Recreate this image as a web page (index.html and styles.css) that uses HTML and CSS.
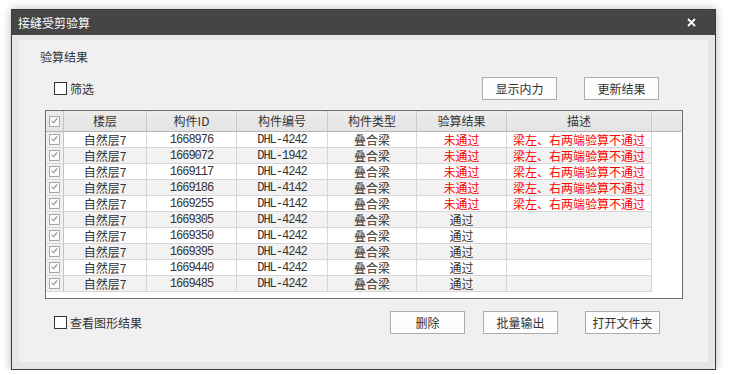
FILE: index.html
```html
<!DOCTYPE html>
<html lang="zh-CN">
<head>
  <meta charset="UTF-8">
  <title>接缝受剪验算</title>
  <link rel="stylesheet" href="styles.css">
</head>
<body>
  <div class="window">
    <div class="titlebar">
      <span class="title">接缝受剪验算</span>
      <svg class="close" width="9" height="9" viewBox="0 0 9 9">
        <path d="M1 1 L8 8 M8 1 L1 8" stroke="#fff" stroke-width="1.8"/>
      </svg>
    </div>
    <div class="frame">
      <div class="panel">
        <div class="caption">验算结果</div>
        <div class="toolbar">
          <label class="check"><span class="box"></span>筛选</label>
          <button class="btn">显示内力</button>
          <button class="btn gap">更新结果</button>
        </div>

        <div class="grid">
          <div class="row head">
            <div class="cell cb"><span class="tick"></span></div>
            <div class="cell">楼层</div>
            <div class="cell">构件ID</div>
            <div class="cell">构件编号</div>
            <div class="cell">构件类型</div>
            <div class="cell">验算结果</div>
            <div class="cell">描述</div>
            <div class="cell"></div>
          </div>
        </div>

        <div class="footer">
          <label class="check"><span class="box"></span>查看图形结果</label>
          <button class="btn">删除</button>
          <button class="btn small-gap">批量输出</button>
          <button class="btn gap">打开文件夹</button>
        </div>
      </div>
    </div>
  </div>
  <script>
    // rows of the check result
    const rows = [
      ['1668976', 'DHL-4242', false],
      ['1669072', 'DHL-1942', false],
      ['1669117', 'DHL-4242', false],
      ['1669186', 'DHL-4142', false],
      ['1669255', 'DHL-4142', false],
      ['1669305', 'DHL-4242', true],
      ['1669350', 'DHL-4242', true],
      ['1669395', 'DHL-4242', true],
      ['1669440', 'DHL-4242', true],
      ['1669485', 'DHL-4242', true],
    ];
    const grid = document.querySelector('.grid');
    rows.forEach((r, i) => {
      const row = document.createElement('div');
      row.className = 'row' + (i % 2 ? ' alt' : '');
      const bad = r[2] ? '' : ' bad';
      row.innerHTML =
        '<div class="cell cb"><span class="tick"></span></div>' +
        '<div class="cell">自然层7</div>' +
        '<div class="cell num">' + r[0] + '</div>' +
        '<div class="cell num">' + r[1] + '</div>' +
        '<div class="cell">叠合梁</div>' +
        '<div class="cell' + bad + '">' + (r[2] ? '通过' : '未通过') + '</div>' +
        '<div class="cell' + bad + '">' + (r[2] ? '' : '梁左、右两端验算不通过') + '</div>';
      grid.appendChild(row);
    });
  </script>
</body>
</html>
```

FILE: styles.css
```css
body {
  margin: 0;
  padding: 9px 0 0 11px;
  background: #fff;
  font-family: "Noto Sans CJK SC", sans-serif;
  font-size: 12px;
  color: #333;
}
.window {
  width: 705px;
  height: 361px;
  box-sizing: border-box;
  border: 1px solid #3a3a3a;
  background: #e6e6e6;
  box-shadow: 0 0 9px rgba(0, 0, 0, 0.28);
}
.titlebar {
  height: 25px;
  background: #454545;
  display: flex;
  align-items: center;
  padding: 0 19px 0 6px;
}
.title {
  color: #fff;
  font-size: 12px;
  flex: 1;
}
.frame {
  padding: 5px 7px 7px 7px;
}
.panel {
  height: 322px;
  background: #f0f0f0;
  display: flex;
  flex-direction: column;
}
.caption {
  margin: 10px 0 0 21px;
  line-height: 14px;
}
.toolbar,
.footer {
  height: 23px;
  display: flex;
  align-items: center;
  margin-top: 13px;
  padding-right: 49px;
}
.footer {
  margin-top: 12px;
  padding-right: 48px;
}
.check {
  display: flex;
  align-items: center;
  margin-left: 35px;
  margin-right: auto;
  font-size: 12px;
}
.box {
  width: 13px;
  height: 13px;
  box-sizing: border-box;
  border: 1px solid #333;
  background: #fff;
  margin-right: 3px;
}
.btn {
  width: 75px;
  height: 23px;
  border: 1px solid #adadad;
  background: #fdfdfd;
  font-family: inherit;
  font-size: 12px;
  color: #333;
  padding: 0;
}
.gap {
  margin-left: 27px;
}
.small-gap {
  margin-left: 18px;
}
.grid {
  margin: 10px 25px 0 26px;
  height: 189px;
  box-sizing: border-box;
  border: 1px solid #6f6f6f;
  background: #fff;
}
.row {
  display: grid;
  grid-template-columns: 18px 83px 90px 91px 89px 90px 145px 29px;
  height: 16px;
}
.row.alt .cell {
  background: #f2f2f2;
}
.row.head {
  height: 21px;
  background: linear-gradient(#ececec, #e3e3e3);
}
.cell {
  box-sizing: border-box;
  border-right: 1px solid #d6d6d6;
  border-bottom: 1px solid #d6d6d6;
  text-align: center;
  line-height: 15px;
  white-space: nowrap;
  overflow: hidden;
}
.num {
  font-family: "Liberation Mono", monospace;
  font-size: 12px;
  letter-spacing: -1px;
  line-height: 17px;
  color: #333;
}
.row .cell:nth-child(8) {
  border: none;
}
.head .cell {
  border-right-color: #c8c8c8;
  border-bottom-color: #b4b4b4;
  line-height: 20px;
}
.head .cell:nth-child(8) {
  border-bottom: 1px solid #b4b4b4;
}
.row .cell.cb {
  background: #f0f0f0;
  border-right-color: #c4c4c4;
  display: flex;
  align-items: center;
  justify-content: center;
}
.head .cell.cb {
  background: none;
}
.tick {
  width: 11px;
  height: 11px;
  box-sizing: border-box;
  border: 1px solid #a9a9a9;
  background: #fafafa;
  position: relative;
}
.tick::after {
  content: "";
  position: absolute;
  left: 3px;
  top: 0px;
  width: 2px;
  height: 5px;
  border-right: 1.5px solid #8a8a8a;
  border-bottom: 1.5px solid #8a8a8a;
  transform: rotate(40deg);
}
.bad {
  color: #f00;
}
```
